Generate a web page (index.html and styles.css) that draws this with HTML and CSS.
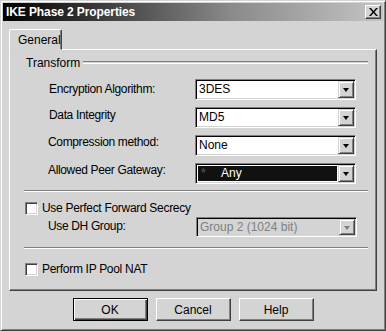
FILE: index.html
```html
<!DOCTYPE html>
<html lang="en">
<head>
    <meta charset="UTF-8">
    <title>IKE Phase 2 Properties</title>
    <link rel="stylesheet" href="styles.css">
</head>
<body>
    <div class="window">
        <div class="titlebar">
            <span class="title">IKE Phase 2 Properties</span>
            <span class="close-btn">
                <svg width="9" height="8" viewBox="0 0 9 8"><path d="M0 0h2l2.5 3 2.5-3h2l-3.5 4 3.5 4h-2l-2.5-3-2.5 3h-2l3.5-4z" fill="#000"/></svg>
            </span>
        </div>

        <div class="tabs">
            <div class="tab">General</div>
        </div>

        <div class="panel">
            <div class="group-head">
                <span>Transform</span>
                <div class="group-line"></div>
            </div>

            <div class="rows">
                <div class="row">
                    <label class="lbl lbl-1">Encryption Algorithm:</label>
                    <div class="combo"><span class="combo-text">3DES</span><span class="arrow"></span></div>
                </div>
                <div class="row">
                    <label class="lbl">Data Integrity</label>
                    <div class="combo"><span class="combo-text">MD5</span><span class="arrow"></span></div>
                </div>
                <div class="row">
                    <label class="lbl lbl-x">Compression method:</label>
                    <div class="combo"><span class="combo-text">None</span><span class="arrow"></span></div>
                </div>
                <div class="row">
                    <label class="lbl lbl-x">Allowed Peer Gateway:</label>
                    <div class="combo combo-sel">
                        <span class="combo-text"><span class="star">*</span>Any</span><span class="arrow"></span>
                    </div>
                </div>
            </div>

            <div class="sep sep-1"></div>

            <div class="check-row check-pfs">
                <span class="checkbox"></span>
                <span>Use Perfect Forward Secrecy</span>
            </div>
            <div class="row dh-row">
                <label class="lbl lbl-x lbl-dh">Use DH Group:</label>
                <div class="combo combo-off"><span class="combo-text">Group 2 (1024 bit)</span><span class="arrow"></span></div>
            </div>

            <div class="sep sep-2"></div>

            <div class="check-row check-nat">
                <span class="checkbox"></span>
                <span>Perform IP Pool NAT</span>
            </div>
        </div>

        <div class="buttons">
            <button type="button" class="btn btn-default">OK</button>
            <button type="button" class="btn">Cancel</button>
            <button type="button" class="btn">Help</button>
        </div>
    </div>
</body>
</html>
```

FILE: styles.css
```css
body {
    margin: 0;
    background-color: #d4d4d4;
    font-family: "Liberation Sans", Arial, sans-serif;
    font-size: 11px;
    color: #000;
}

.window {
    box-sizing: border-box;
    width: 386px;
    height: 331px;
    padding: 2px;
    background-color: #d4d4d4;
    border: 1px solid;
    border-color: #d4d4d4 #404040 #404040 #d4d4d4;
    box-shadow: inset 1px 1px 0 #fff, inset -1px -1px 0 #808080;
}

.titlebar {
    height: 18px;
    display: flex;
    align-items: center;
    justify-content: space-between;
    padding: 0 2px 0 3px;
    background: linear-gradient(to right, #000 0%, #3a3a3a 25%, #8a8a8a 60%, #c4c4c4 100%);
}

.title {
    color: #fff;
    font-weight: bold;
    font-size: 12px;
    letter-spacing: -0.1px;
}

.close-btn {
    box-sizing: border-box;
    width: 16px;
    height: 14px;
    display: flex;
    align-items: center;
    justify-content: center;
    background-color: #d4d4d4;
    border: 1px solid;
    border-color: #fff #404040 #404040 #fff;
    box-shadow: inset -1px -1px 0 #808080;
}

.tabs {
    display: flex;
    margin: 8px 0 0 6px;
}

.tab {
    box-sizing: border-box;
    width: 53px;
    height: 21px;
    margin-bottom: -1px;
    padding: 3px 0 0 8px;
    font-size: 12px;
    background-color: #d4d4d4;
    border: 1px solid;
    border-color: #fff #404040 #d4d4d4 #fff;
    border-radius: 2px 2px 0 0;
    box-shadow: inset -1px 0 0 #808080;
    position: relative;
    z-index: 1;
}

.panel {
    box-sizing: border-box;
    width: 368px;
    height: 242px;
    margin-left: 6px;
    padding-top: 6px;
    border: 1px solid;
    border-color: #fff #404040 #404040 #fff;
    box-shadow: inset -1px -1px 0 #808080;
}

.group-head {
    display: flex;
    align-items: center;
    height: 13px;
    margin: 0 8px 0 15px;
    font-size: 12px;
}

.group-head span {
    padding: 0 3px 0 1px;
}

.group-line {
    flex: 1;
    height: 1px;
    border-top: 1px solid #808080;
    border-bottom: 1px solid #fff;
}

.rows {
    display: flex;
    flex-direction: column;
    gap: 7px;
    margin-top: 10px;
}

.row {
    display: flex;
    align-items: flex-start;
    padding-left: 39px;
}

.lbl {
    width: 146px;
    padding-top: 1px;
    font-size: 12px;
    letter-spacing: -0.35px;
}

.lbl-1 {
    padding-top: 3px;
}

.lbl-x {
    margin-left: -1px;
    width: 147px;
    padding-top: 0;
}

.lbl-dh {
    padding-top: 2px;
}

.combo {
    box-sizing: border-box;
    width: 161px;
    height: 21px;
    display: flex;
    border: 1px solid;
    border-color: #808080 #fff #fff #808080;
    box-shadow: inset 1px 1px 0 #000, inset -1px -1px 0 #d4d4d4;
    padding: 2px;
    background-color: #fff;
}

.combo-text {
    flex: 1;
    padding-left: 1px;
    line-height: 15px;
    font-size: 12px;
}

.arrow {
    box-sizing: border-box;
    width: 16px;
    height: 17px;
    margin: -1px -1px -1px 0;
    position: relative;
    background-color: #d4d4d4;
    border: 1px solid;
    border-color: #d4d4d4 #404040 #404040 #d4d4d4;
    box-shadow: inset 1px 1px 0 #fff, inset -1px -1px 0 #808080;
}

.arrow::after {
    content: "";
    position: absolute;
    left: 4px;
    top: 6px;
    border-left: 3.5px solid transparent;
    border-right: 3.5px solid transparent;
    border-top: 4px solid #000;
}

.combo-sel .combo-text {
    margin: 0 1px 0 0;
    background-color: #111;
    color: #fff;
    box-shadow: 0 0 0 1px #fff;
}

.star {
    display: inline-block;
    width: 20px;
    padding-left: 2px;
    color: #444;
    font-weight: bold;
}

.combo-off {
    background-color: #d4d4d4;
    height: 20px;
}

.combo-off .combo-text {
    color: #808080;
    line-height: 14px;
}

.combo-off .arrow {
    height: 16px;
}

.combo-off .arrow::after {
    border-top-color: #808080;
}

.sep {
    height: 0;
    margin: 0 8px 0 14px;
    border-top: 1px solid #808080;
    border-bottom: 1px solid #fff;
}

.sep-1 {
    margin-top: 6px;
}

.sep-2 {
    margin-top: 10px;
}

.check-row {
    display: flex;
    align-items: center;
    gap: 4px;
    padding-left: 15px;
    font-size: 12px;
    letter-spacing: -0.3px;
}

.check-pfs {
    margin-top: 9px;
}

.check-nat {
    margin-top: 13px;
}

.checkbox {
    box-sizing: border-box;
    width: 13px;
    height: 13px;
    background-color: #fff;
    border: 1px solid;
    border-color: #808080 #fff #fff #808080;
    box-shadow: inset 1px 1px 0 #404040, inset -1px -1px 0 #d4d4d4;
}

.dh-row {
    margin-top: 2px;
}

.dh-row .combo {
    margin-left: 1px;
}

.buttons {
    display: flex;
    justify-content: center;
    gap: 8px;
    margin-top: 7px;
}

.btn {
    box-sizing: border-box;
    width: 75px;
    height: 23px;
    padding: 0;
    font-family: "Liberation Sans", Arial, sans-serif;
    font-size: 12px;
    color: #000;
    background-color: #d4d4d4;
    border: 1px solid;
    border-color: #fff #404040 #404040 #fff;
    box-shadow: inset -1px -1px 0 #808080;
}

.btn-default {
    border: 1px solid #000;
    box-shadow: inset 1px 1px 0 #fff, inset -1px -1px 0 #404040, inset -2px -2px 0 #808080;
}
```
